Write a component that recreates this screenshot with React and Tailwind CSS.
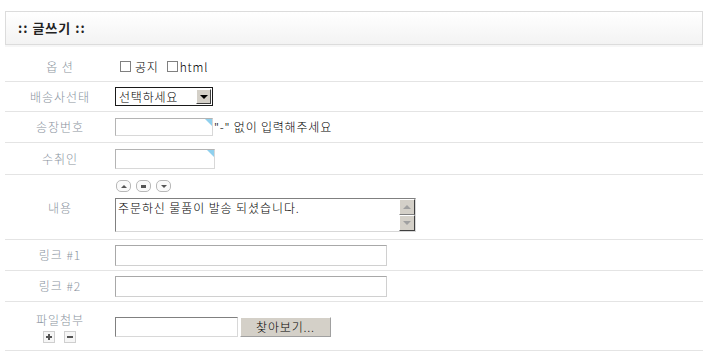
import { useState } from 'react';

const font = { fontFamily: '"Noto Sans CJK KR", "Noto Sans", sans-serif' };

function Label({ children }) {
  return (
    <div className="w-[110px] shrink-0 text-center text-[12px] font-light tracking-[1px] text-[#8a94a0]">{children}</div>
  );
}

function CornerInput({ w, h }) {
  return (
    <div className={`relative ${w} ${h} border border-[#b4b4b4] border-r-[#d8d8d8] border-b-[#d8d8d8] bg-white`}>
      <span className="absolute right-0 top-0 w-0 h-0 border-l-[7px] border-l-transparent border-t-[7px] border-t-[#8fd0ee]" />
    </div>
  );
}

function RoundBtn({ children }) {
  return (
    <div className="w-[15px] h-[12px] rounded-[5px] border border-[#b8b8b8] bg-[#fafafa] flex items-center justify-center">
      {children}
    </div>
  );
}

export default function App() {
  const [notice, setNotice] = useState(false);
  const [html, setHtml] = useState(false);

  return (
    <div className="w-[709px] h-[356px] bg-white pt-[11px]" style={font}>
      <div className="ml-[5px] w-[698px]">
        {/* header */}
        <div className="h-[34px] border border-[#dcdcdc] bg-gradient-to-b from-white to-[#f3f3f3] flex items-center pl-[12px] text-[13px] font-bold tracking-[1px] text-[#222]">
          :: 글쓰기 ::
        </div>
        <div className="h-[2px] bg-[#f6f6f6]" />

        {/* 옵션 */}
        <div className="h-[35px] border-b border-[#e4e4e4] flex items-center pt-[5px]">
          <Label>옵 션</Label>
          <div className="flex items-center text-[12px] font-light tracking-[0.8px] text-black ml-[5px]">
            <button
              onClick={() => setNotice(!notice)}
              className="w-[11px] h-[11px] border border-[#808080] bg-white mr-[4px]"
            />
            <span className="mr-[8px]">공지</span>
            <button
              onClick={() => setHtml(!html)}
              className="w-[11px] h-[11px] border border-[#808080] bg-white mr-[2px]"
            />
            <span>html</span>
          </div>
        </div>

        {/* 배송사선태 */}
        <div className="h-[30px] border-b border-[#e4e4e4] flex items-center">
          <Label>배송사선태</Label>
          <div className="w-[98px] h-[19px] border border-[#1a1a1a] flex items-center justify-between bg-white">
            <span className="text-[12px] font-light tracking-[0.8px] text-black pl-[3px] leading-none">선택하세요</span>
            <div className="w-[15px] h-[15px] mr-[1px] bg-[#d4d0c8] border border-t-white border-l-white border-r-[#404040] border-b-[#404040] flex items-center justify-center">
              <span className="w-0 h-0 border-l-[4px] border-r-[4px] border-t-[4px] border-l-transparent border-r-transparent border-t-black" />
            </div>
          </div>
        </div>

        {/* 송장번호 */}
        <div className="h-[31px] border-b border-[#e4e4e4] flex items-center">
          <Label>송장번호</Label>
          <CornerInput w="w-[98px]" h="h-[18px]" />
          <span className="text-[12px] font-light tracking-[0.8px] text-black ml-[1px]">"-" 없이 입력해주세요</span>
        </div>

        {/* 수취인 */}
        <div className="h-[32px] border-b border-[#e4e4e4] flex items-center">
          <Label>수취인</Label>
          <CornerInput w="w-[100px]" h="h-[20px]" />
        </div>

        {/* 내용 */}
        <div className="h-[65px] border-b border-[#e4e4e4] flex">
          <div className="flex items-center pt-[1px]">
            <Label>내용</Label>
          </div>
          <div className="flex flex-col pt-[5px]">
            <div className="flex gap-[5px] ml-[1px]">
              <RoundBtn>
                <span className="w-0 h-0 border-l-[3px] border-r-[3px] border-b-[3px] border-l-transparent border-r-transparent border-b-[#555]" />
              </RoundBtn>
              <RoundBtn>
                <span className="w-[5px] h-[3px] bg-[#555]" />
              </RoundBtn>
              <RoundBtn>
                <span className="w-0 h-0 border-l-[3px] border-r-[3px] border-t-[3px] border-l-transparent border-r-transparent border-t-[#555]" />
              </RoundBtn>
            </div>
            <div className="mt-[6px] w-[301px] h-[34px] border border-[#808080] border-r-[#d8d8d8] border-b-[#d8d8d8] bg-white flex">
              <div className="flex-1 text-[12px] font-light tracking-[0.9px] text-black pl-[2px] pt-[1px] leading-[16px]">주문하신 물품이 발송 되셨습니다.</div>
              <div className="w-[16px] flex flex-col bg-[#f0f0f0]">
                <div className="h-[16px] bg-[#d4d0c8] border border-t-white border-l-white border-r-[#404040] border-b-[#808080] flex items-center justify-center">
                  <span className="w-0 h-0 border-l-[4px] border-r-[4px] border-b-[4px] border-l-transparent border-r-transparent border-b-[#a0a0a0]" />
                </div>
                <div className="h-[16px] bg-[#d4d0c8] border border-t-white border-l-white border-r-[#404040] border-b-[#404040] flex items-center justify-center">
                  <span className="w-0 h-0 border-l-[4px] border-r-[4px] border-t-[4px] border-l-transparent border-r-transparent border-t-[#a0a0a0]" />
                </div>
              </div>
            </div>
          </div>
        </div>

        {/* 링크 #1 */}
        <div className="h-[31px] border-b border-[#e4e4e4] flex items-center">
          <Label>링크 #1</Label>
          <div className="w-[272px] h-[21px] border border-[#a8a8a8] border-r-[#d0d0d0] border-b-[#d0d0d0] bg-white" />
        </div>

        {/* 링크 #2 */}
        <div className="h-[31px] border-b border-[#e4e4e4] flex items-center">
          <Label>링크 #2</Label>
          <div className="w-[272px] h-[21px] border border-[#a8a8a8] border-r-[#d0d0d0] border-b-[#d0d0d0] bg-white" />
        </div>

        {/* 파일첨부 */}
        <div className="h-[49px] border-b border-[#e4e4e4] flex items-center">
          <div className="w-[110px] shrink-0 flex flex-col items-center pt-[3px]">
            <span className="text-[12px] font-light tracking-[1px] text-[#8a94a0] leading-[14px]">파일첨부</span>
            <div className="flex gap-[9px] mt-[4px] mr-[2px]">
              <div className="w-[12px] h-[12px] border border-[#cfcfcf] bg-[#f6f6f6] flex items-center justify-center relative">
                <span className="absolute w-[6px] h-[2px] bg-[#555]" />
                <span className="absolute w-[2px] h-[6px] bg-[#555]" />
              </div>
              <div className="w-[12px] h-[12px] border border-[#cfcfcf] bg-[#f6f6f6] flex items-center justify-center">
                <span className="w-[6px] h-[2px] bg-[#555]" />
              </div>
            </div>
          </div>
          <div className="flex items-center gap-[2px] mt-[1px]">
            <div className="w-[123px] h-[20px] border border-[#808080] border-r-[#d8d8d8] border-b-[#d8d8d8] bg-white" />
            <button className="w-[91px] h-[20px] bg-[#d4d0c8] border border-t-white border-l-white border-r-[#a0a0a0] border-b-[#a0a0a0] text-[12px] font-light tracking-[0.8px] text-black leading-none">
              찾아보기...
            </button>
          </div>
        </div>
      </div>
    </div>
  );
}
